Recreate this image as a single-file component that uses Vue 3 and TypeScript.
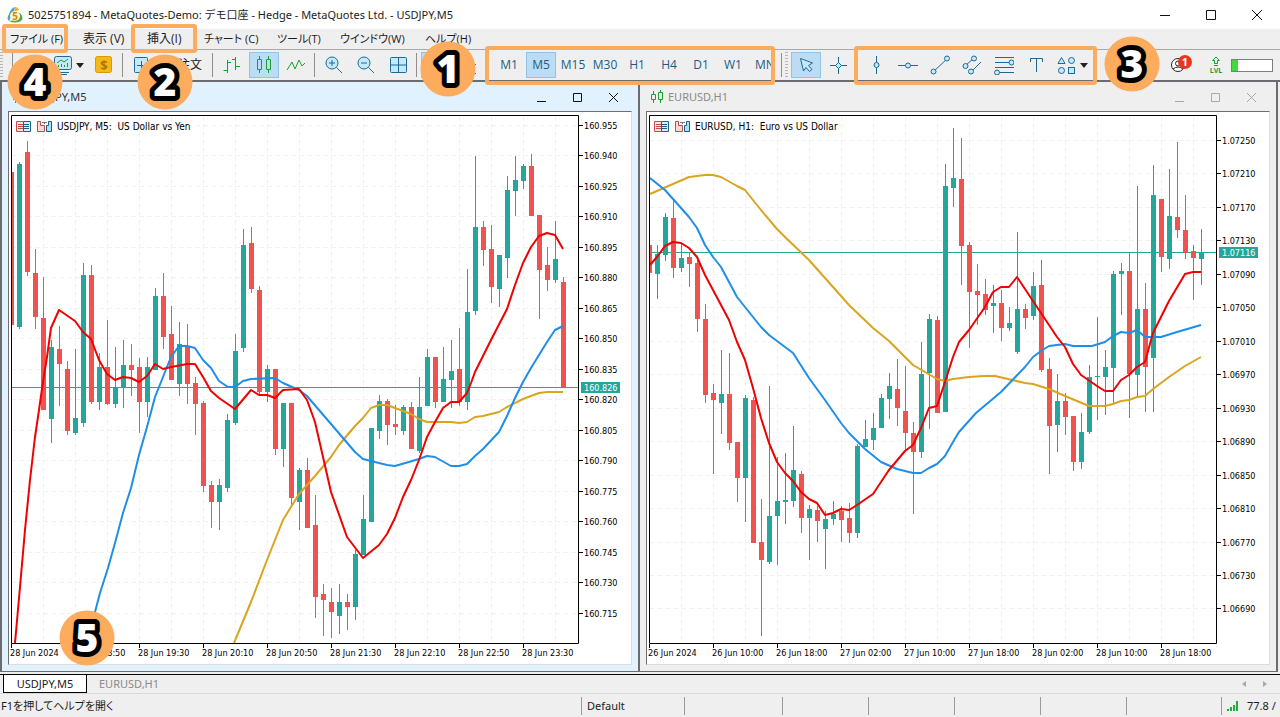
<script setup lang="ts">
import { ref } from 'vue'

type Candle = { x: number; up: boolean; high: number; top: number; bottom: number; low: number }
type Tick = { pos: number; label: string }

interface Chart {
  id: string
  name: string
  title: string
  active: boolean
  originX: number
  frameX: number
  lastY: number
  lastPrice: string
  candles: Candle[]
  averages: { color: string; points: string }[]
  prices: Tick[]
  times: Tick[]
  gridX: number[]
}

const CANDLE_STEP = 8

// Each record reads: direction (u/d), high, body top, body bottom, low.
function parseCandles(source: string, firstX: number): Candle[] {
  return source
    .trim()
    .split(/\s+/)
    .map((record, i) => {
      const [high, top, bottom, low] = record.slice(1).split(',').map(Number)
      return { x: firstX + i * CANDLE_STEP, up: record[0] === 'u', high, top, bottom, low }
    })
}

function priceTicks(start: number, delta: number, digits: number, count: number, y: number, step: number): Tick[] {
  return Array.from({ length: count }, (_, i) => ({
    pos: Math.round(y + i * step),
    label: (start - delta * i).toFixed(digits),
  }))
}

function timeTicks(labels: string[], x: number): Tick[] {
  return labels.map((label, i) => ({ pos: x + i * 64, label }))
}

function gridColumns(frameX: number): number[] {
  return Array.from({ length: 17 }, (_, i) => frameX + 32 * (i + 1))
}

const usdjpyCandles = `
d172,172,325,325 u162,164,327,329 d141,152,272,276 d249,273,317,329 d277,318,410,410 u340,347,419,443
d326,349,364,406 d361,369,431,435 u349,418,433,435 u263,275,423,427 d265,275,402,404 u353,367,402,410
d320,367,404,405 u347,388,404,408 u340,365,387,408 d344,365,370,396 d358,367,402,433 u357,367,402,417
u288,296,370,370 d273,296,337,349 d306,334,380,380 u322,344,384,396 d324,347,384,404 d377,383,404,435
d401,403,486,492 d481,485,502,528 u479,485,502,530 u414,420,488,492 u334,351,423,425 u229,245,348,352
d227,243,289,293 d286,290,392,394 u365,369,392,402 d369,369,449,455 u403,403,449,467 d403,403,498,505
u468,470,502,530 d458,470,528,528 d495,525,597,618 d584,594,600,636 d588,602,612,638 u584,602,616,634
d594,602,607,630 u550,554,607,620 u495,519,555,555 u428,428,522,522 u395,401,431,439 d399,401,425,445
d405,424,427,435 u405,407,431,435 d402,407,449,449 u377,407,451,453 u349,357,406,406 d357,357,402,408
u347,379,402,402 u340,371,380,408 d328,369,402,406 u269,312,402,410 u156,227,311,315 d221,227,250,266
d225,249,287,303 u255,255,289,307 u176,190,258,278 u156,180,191,216 u164,166,181,189 d154,166,216,216
d215,215,270,319 d247,265,280,291 u221,259,280,283 d277,282,388,388`

const eurusdCandles = `
d245,245,273,273 u245,254,274,299 u213,217,255,261 d200,218,268,278 u243,258,268,272 d253,257,264,287
d260,263,319,332 d304,319,395,403 d384,393,400,474 u350,394,403,434 d353,394,443,450 d442,442,478,502
u395,398,478,522 d397,400,543,543 d499,542,560,636 u386,516,562,564 u457,501,516,565 u453,500,502,524
u426,470,501,507 d471,474,518,533 u505,509,518,560 d506,510,521,542 u511,519,529,569 u501,514,519,525
d506,511,520,542 d503,518,533,543 u444,446,533,538 u420,439,447,447 u413,428,440,450 u394,398,428,428
u373,386,399,419 d359,389,408,426 d366,411,433,450 d422,433,452,514 u342,374,452,458 u314,319,373,429
d316,320,413,413 u164,186,412,412 u128,178,188,207 d138,179,246,285 d242,245,292,348 d264,291,295,325
d279,294,310,315 u285,303,306,333 d290,303,328,341 u307,323,328,331 u232,309,352,354 d304,309,318,329
u272,286,316,320 d260,285,370,372 d358,369,426,474 u374,401,425,452 d393,401,417,435 d416,416,462,471
u413,432,462,469 u365,377,432,434 u317,376,377,420 u350,367,377,415 u271,274,368,404 u263,271,274,315
d253,271,374,418 u186,309,375,397 d283,309,367,412 u165,195,358,412 d199,199,257,272 u169,216,259,269
d142,217,230,238 d195,230,253,259 d245,251,258,300 u229,253,259,285`

const charts: Chart[] = [
  {
    id: 'usdjpy',
    name: 'USDJPY,M5',
    title: 'USDJPY, M5:\u00a0 US Dollar vs Yen',
    active: true,
    originX: 9,
    frameX: 11,
    lastY: 387,
    lastPrice: '160.826',
    candles: parseCandles(usdjpyCandles, 11),
    averages: [
      {
        color: '#d9a520',
        points:
          '234,643 251,602 267,560 283,520 299,494 315,476 331,457 339,445 355,426 363,418 371,408 379,405 387,405 395,408 411,414 419,419 427,422 451,422 459,423 467,422 475,417 483,416 499,412 507,407 523,399 539,393 547,392 563,392',
      },
      {
        color: '#1e8fe8',
        points:
          '91,624 95,612 100,593 108,568 115,543 123,513 131,488 139,455 147,427 155,397 163,377 171,357 179,346 187,346 195,348 203,360 211,368 219,381 228,387 235,387 243,381 251,379 275,378 283,383 299,390 307,396 331,424 355,452 363,459 387,465 395,466 419,459 427,456 435,457 451,466 459,466 467,464 475,456 483,449 499,432 507,416 515,398 523,382 531,368 547,342 555,330 563,326',
      },
      {
        color: '#f00000',
        points:
          '15,643 20,587 25,530 30,480 35,437 39,410 43,382 47,357 51,328 59,310 75,321 83,332 91,339 99,360 107,374 115,380 123,377 131,378 139,382 147,376 155,364 163,369 171,367 187,364 195,364 203,377 211,391 219,398 235,409 251,390 259,395 267,395 275,398 283,390 299,389 307,400 315,422 323,457 331,492 347,537 363,558 379,545 387,534 395,518 403,497 411,480 419,460 427,437 435,422 443,408 451,402 459,402 467,393 471,383 475,372 491,340 507,309 515,285 523,263 531,247 539,236 547,233 555,235 563,249',
      },
    ],
    prices: priceTicks(160.955, 0.015, 3, 17, 125, 30.47),
    times: timeTicks(
      ['28 Jun 2024', '28 Jun 18:50', '28 Jun 19:30', '28 Jun 20:10', '28 Jun 20:50', '28 Jun 21:30', '28 Jun 22:10', '28 Jun 22:50', '28 Jun 23:30'],
      11,
    ),
    gridX: gridColumns(11),
  },
  {
    id: 'eurusd',
    name: 'EURUSD,H1',
    title: 'EURUSD, H1:\u00a0 Euro vs US Dollar',
    active: false,
    originX: 647,
    frameX: 649,
    lastY: 252,
    lastPrice: '1.07116',
    candles: parseCandles(eurusdCandles, 649),
    averages: [
      {
        color: '#d9a520',
        points:
          '650,194 673,184 689,177 705,175 713,175 721,177 737,186 745,190 761,210 777,229 785,237 809,260 825,278 849,305 873,328 889,341 913,365 937,379 945,381 953,379 969,377 984,376 995,376 1025,383 1033,384 1049,389 1065,396 1089,406 1105,406 1113,404 1121,401 1129,400 1137,397 1145,396 1153,389 1169,377 1185,366 1201,357',
      },
      {
        color: '#1e8fe8',
        points:
          '650,178 665,190 681,208 689,217 697,228 705,245 713,257 721,267 737,297 745,307 761,327 769,335 793,353 809,378 825,400 841,423 849,433 865,449 881,462 897,469 913,473 921,473 929,468 937,464 945,456 953,442 959,432 976,413 1001,392 1025,367 1033,357 1041,351 1049,346 1065,344 1073,346 1092,346 1105,342 1113,336 1121,332 1129,333 1137,330 1145,337 1161,337 1177,332 1201,325',
      },
      {
        color: '#f00000',
        points:
          '650,265 657,257 665,246 673,242 681,243 689,248 697,257 705,275 713,290 721,305 729,320 737,342 745,360 753,388 761,418 769,443 777,462 785,473 793,481 801,492 809,499 817,503 825,515 833,513 841,509 849,510 857,505 873,494 889,470 905,451 913,445 921,428 929,408 937,406 945,382 953,357 959,342 969,330 985,307 993,292 1001,287 1009,287 1017,277 1041,313 1057,337 1065,347 1073,364 1081,375 1097,386 1105,391 1113,391 1121,380 1129,375 1137,367 1145,362 1153,333 1169,301 1185,274 1193,272 1201,272',
      },
    ],
    prices: priceTicks(1.0725, 0.0004, 5, 15, 140, 33.46),
    times: timeTicks(
      ['26 Jun 2024', '26 Jun 10:00', '26 Jun 18:00', '27 Jun 02:00', '27 Jun 10:00', '27 Jun 18:00', '28 Jun 02:00', '28 Jun 10:00', '28 Jun 18:00'],
      649,
    ),
    gridX: gridColumns(649),
  },
]

const menus = [
  { label: 'ファイル (F)', size: 'w73', kana: true },
  { label: '表示 (V)', size: 'w64', kana: false },
  { label: '挿入(I)', size: 'w57', kana: false },
  { label: 'チャート (C)', size: 'w73', kana: true },
  { label: 'ツール(T)', size: 'w63', kana: true },
  { label: 'ウインドウ(W)', size: 'w85', kana: true },
  { label: 'ヘルプ(H)', size: 'w63', kana: true },
]

const timeframes = ['M1', 'M5', 'M15', 'M30', 'H1', 'H4', 'D1', 'W1', 'MN']
const timeframe = ref('M5')

const callouts = [
  { n: 1, place: 'c1' },
  { n: 2, place: 'c2' },
  { n: 3, place: 'c3' },
  { n: 4, place: 'c4' },
  { n: 5, place: 'c5' },
]
</script>

<template>
  <div class="app">
    <header class="titlebar">
      <svg class="logo" width="18" height="18" viewBox="0 0 18 18">
        <path d="M9 1 Q12 1 13 4 L8 6 Z" fill="#f0b41c" />
        <path d="M9 1 Q5 2 3 8 Q0 13 3 15 L7 8 Z" fill="#4f9fd0" />
        <path d="M3 15 Q9 18 15 15 Q18 13 15 8 L12 6 Q14 12 9 14 Z" fill="#5aa646" />
        <circle cx="9" cy="10" r="5" fill="#fff4cf" />
        <text x="9" y="14" text-anchor="middle" class="logo-text">5</text>
      </svg>
      <h1 class="app-title">5025751894 - MetaQuotes-Demo: デモ口座 - Hedge - MetaQuotes Ltd. - USDJPY,M5</h1>
      <div class="window-buttons">
        <button type="button" aria-label="Minimize"><svg width="12" height="12"><path d="M1 6.500H11" /></svg></button>
        <button type="button" aria-label="Maximize"><svg width="12" height="12"><path d="M1.500 1.500H10.500V10.500H1.500Z" /></svg></button>
        <button type="button" aria-label="Close"><svg width="12" height="12"><path d="M1 1L11 11M11 1L1 11" /></svg></button>
      </div>
    </header>

    <nav class="menubar">
      <button v-for="m in menus" :key="m.label" type="button" :class="[m.size, { kana: m.kana }]">{{ m.label }}</button>
    </nav>

    <div class="toolbar">
      <i class="grip"></i>
      <i class="sep first"></i>
      <div class="group">
        <button type="button" class="tool" aria-label="New chart"></button>
        <button type="button" class="tool drop" aria-label="Profiles">
          <svg width="20" height="20" viewBox="0 0 20 20">
            <rect class="lt" x="1.500" y="1.500" width="17" height="13" rx="2" />
            <path class="ln" d="M4 17.500H16M6 19.500H14" />
            <path class="gr" d="M4 8L8 5L11 7L15 4M5.500 12V10M8.500 12V9M11.500 12V10M14.500 12V8" />
          </svg>
          <svg width="8" height="5" viewBox="0 0 8 5"><path d="M0 0H8L4 5Z" fill="#222" /></svg>
        </button>
        <button type="button" class="tool" aria-label="Market">
          <svg width="20" height="20" viewBox="0 0 20 20">
            <rect x="1.500" y="1.500" width="16" height="16" rx="2" fill="#f5b915" stroke="#d59a08" />
            <text x="10" y="15" text-anchor="middle" class="dollar">$</text>
          </svg>
        </button>
      </div>
      <i class="sep"></i>
      <button type="button" class="order">
        <svg width="16" height="18" viewBox="0 0 16 18">
          <rect class="lt" x="0.500" y="1.500" width="13" height="15" rx="1" />
          <path class="ln" d="M3 9.500H11M7.500 5V13" />
        </svg>
        <span>新規注文</span>
      </button>
      <i class="sep"></i>
      <div class="group">
        <button type="button" class="tool" aria-label="Bar chart">
          <svg width="20" height="20" viewBox="0 0 20 20"><path class="gr" d="M5.500 5V18M1.500 15.500H5.500M5.500 7.500H9M13.500 2V15M10 4.500H13.500M13.500 11.500H18" /></svg>
        </button>
        <button type="button" class="tool on" aria-label="Candlesticks">
          <svg width="20" height="20" viewBox="0 0 20 20"><path class="gr" d="M5.500 1V4M5.500 15V18M3.500 4.500H7.500V14.500H3.500ZM14.500 1V4M14.500 15V18M12.500 4.500H16.500V14.500H12.500Z" /></svg>
        </button>
        <button type="button" class="tool" aria-label="Line chart">
          <svg width="20" height="20" viewBox="0 0 20 20"><path class="gr" d="M1 15L6 7L9 14L13 5L16 11L19 8" /></svg>
        </button>
      </div>
      <i class="sep"></i>
      <div class="group">
        <button type="button" class="tool" aria-label="Zoom in">
          <svg width="20" height="20" viewBox="0 0 20 20"><circle class="lt" cx="8" cy="8" r="6" /><path class="ln" d="M12.500 12.500L18 18M5 8H11M8 5V11" /></svg>
        </button>
        <button type="button" class="tool" aria-label="Zoom out">
          <svg width="20" height="20" viewBox="0 0 20 20"><circle class="lt" cx="8" cy="8" r="6" /><path class="ln" d="M12.500 12.500L18 18M5 8H11" /></svg>
        </button>
        <button type="button" class="tool" aria-label="Tile windows">
          <svg width="20" height="20" viewBox="0 0 20 20"><rect class="lt" x="2.500" y="2.500" width="16" height="15" rx="1" /><path class="ln" d="M10.500 2V18M2 10H18" /></svg>
        </button>
      </div>
      <i class="sep"></i>
      <div class="group">
        <button type="button" class="tool on" aria-label="Auto scroll"></button>
        <button type="button" class="tool" aria-label="Chart shift">
          <svg width="20" height="20" viewBox="0 0 20 20"><path class="ln" d="M14 9.500H18M14 18.500H18M4 2V18" /></svg>
        </button>
      </div>
      <i class="sep"></i>
      <div class="group frames">
        <button
          v-for="t in timeframes"
          :key="t"
          type="button"
          class="tool"
          :class="{ on: timeframe === t }"
          @click="timeframe = t"
        >{{ t }}</button>
      </div>
      <i class="sep wide"></i>
      <i class="grip"></i>
      <div class="group">
        <button type="button" class="tool on" aria-label="Cursor">
          <svg width="20" height="20" viewBox="0 0 20 20"><path class="lt" d="M4.500 3.500L16.500 8L12.500 10.500L16 14.500L13.500 16.500L10 12.500L7.500 16Z" /></svg>
        </button>
        <button type="button" class="tool" aria-label="Crosshair">
          <svg width="20" height="20" viewBox="0 0 20 20"><path class="ln" d="M10.500 2V8M10.500 13V19M2 10.500H8M13 10.500H19" /><path class="lt" d="M10.500 7.500L13.500 10.500L10.500 13.500L7.500 10.500Z" /></svg>
        </button>
      </div>
      <i class="sep"></i>
      <div class="group">
        <button type="button" class="tool" aria-label="Vertical line">
          <svg width="20" height="20" viewBox="0 0 20 20"><path class="ln" d="M10.500 1V19" /><circle class="lt" cx="10.500" cy="10" r="2.500" /></svg>
        </button>
        <button type="button" class="tool" aria-label="Horizontal line">
          <svg width="20" height="20" viewBox="0 0 20 20"><path class="ln" d="M0 10.500H20" /><circle class="lt" cx="10" cy="10.500" r="2.500" /></svg>
        </button>
        <button type="button" class="tool" aria-label="Trend line">
          <svg width="20" height="20" viewBox="0 0 20 20"><path class="ln" d="M3 17L18 3" /><circle class="lt" cx="3.500" cy="16.500" r="2.500" /><circle class="lt" cx="17" cy="3.500" r="2.500" /></svg>
        </button>
        <button type="button" class="tool" aria-label="Channel">
          <svg width="20" height="20" viewBox="0 0 20 20"><path class="ln" d="M3 11L12 3M9 17L19 7" /><circle class="lt" cx="3.500" cy="11" r="2.500" /><circle class="lt" cx="12" cy="3.500" r="2.500" /><circle class="lt" cx="9" cy="16.500" r="2.500" /></svg>
        </button>
        <button type="button" class="tool" aria-label="Fibonacci">
          <svg width="20" height="20" viewBox="0 0 20 20"><path class="ln" d="M1 2.500H20M1 7.500H15M1 12.500H20M5 17.500H20" /><circle class="lt" cx="17.500" cy="7.500" r="2.500" /><circle class="lt" cx="3" cy="17.500" r="2.500" /></svg>
        </button>
        <button type="button" class="tool" aria-label="Text">
          <svg width="20" height="20" viewBox="0 0 20 20"><path class="ln" d="M4.500 7V3.500H16.500V7M10.500 3.500V17" /></svg>
        </button>
        <button type="button" class="tool drop" aria-label="Shapes">
          <svg width="20" height="20" viewBox="0 0 20 20"><path class="lt" d="M4.500 2.500L8 8.500H1Z" /><circle class="lt" cx="14.500" cy="5.500" r="3" /><circle class="lt" cx="4.500" cy="15.500" r="3" /><rect class="lt" x="11.500" y="12.500" width="6" height="6" /></svg>
          <svg width="8" height="5" viewBox="0 0 8 5"><path d="M0 0H8L4 5Z" fill="#222" /></svg>
        </button>
      </div>
      <div class="account">
        <button type="button" class="tool" aria-label="Notifications">
          <svg width="24" height="20" viewBox="0 0 24 20">
            <circle cx="8" cy="10" r="6.500" fill="#fff" stroke="#222" />
            <circle cx="8" cy="8.500" r="2.500" fill="none" stroke="#222" />
            <path d="M3 14Q8 10 13 14" fill="none" stroke="#222" />
            <circle cx="15" cy="7" r="7" fill="#e8371f" />
            <text x="15" y="11" text-anchor="middle" class="count">1</text>
          </svg>
        </button>
        <svg class="level" width="16" height="20" viewBox="0 0 16 20">
          <path class="gr" d="M6.500 8.500V5.500H4.500L8 2L11.500 5.500H9.500V8.500ZM6 10.500H10" />
          <text x="8" y="18" text-anchor="middle" class="lvl">LVL</text>
        </svg>
        <div class="meter"><i></i></div>
      </div>
    </div>

    <main class="workspace">
      <section v-for="c in charts" :key="c.id" class="chart-window" :class="{ active: c.active }">
        <header class="chart-head">
          <svg width="14" height="14" viewBox="0 0 14 14"><path class="gr" d="M3.500 1V4M3.500 10V13M1.500 4.500H5.500V9.500H1.500ZM10.500 0V2M10.500 10V13M8.500 2.500H12.500V9.500H8.500Z" /></svg>
          <h2>{{ c.name }}</h2>
          <div class="chart-buttons">
            <button type="button" aria-label="Minimize"><svg width="12" height="12"><path d="M1 10.500H10" /></svg></button>
            <button type="button" aria-label="Maximize"><svg width="12" height="12"><path d="M1.500 2.500H9.500V10.500H1.500Z" /></svg></button>
            <button type="button" aria-label="Close"><svg width="12" height="12"><path d="M1 2L10 11M10 2L1 11" /></svg></button>
          </div>
        </header>
        <div class="canvas">
          <svg :viewBox="`${c.originX} 112 622 552`" role="img" :aria-label="c.name">
            <defs>
              <clipPath :id="c.id + '-clip'"><rect :x="c.frameX" y="115" width="568" height="529" /></clipPath>
            </defs>
            <g class="grid">
              <path v-for="x in c.gridX" :key="x" :d="`M${x + 0.5} 116V643`" />
              <path v-for="p in c.prices" :key="p.pos" :d="`M${c.frameX} ${p.pos + 0.5}H${c.frameX + 567}`" />
            </g>
            <g :clip-path="`url(#${c.id}-clip)`">
              <rect class="up" :x="c.frameX" :y="c.lastY" width="568" height="1" />
              <g v-for="k in c.candles" :key="k.x" :class="k.up ? 'up' : 'down'">
                <rect :x="k.x" :y="k.high" width="1" :height="k.low - k.high" />
                <rect :x="k.x - 2" :y="k.top" width="5" :height="k.bottom - k.top" />
              </g>
              <polyline v-for="a in c.averages" :key="a.color" :points="a.points" :stroke="a.color" class="ma" />
            </g>
            <path class="frame" :d="`M${c.frameX + 0.5} 115.5H${c.frameX + 567.5}V643.5H${c.frameX + 0.5}Z`" />
            <g v-for="p in c.prices" :key="p.label">
              <path class="frame" :d="`M${c.frameX + 568} ${p.pos + 0.5}H${c.frameX + 572}`" />
              <text :x="c.frameX + 573" :y="p.pos + 4" class="axis">{{ p.label }}</text>
            </g>
            <g v-for="t in c.times" :key="t.label">
              <path class="frame" :d="`M${t.pos + 0.5} 644V648`" />
              <text :x="t.pos - 1" y="656" class="axis">{{ t.label }}</text>
            </g>
            <rect class="up" :x="c.frameX + 570" :y="c.lastY - 5" width="39" height="11" />
            <text :x="c.frameX + 573" :y="c.lastY + 4" class="axis last">{{ c.lastPrice }}</text>
            <g :transform="`translate(${c.frameX + 5} 121)`" fill="none">
              <path d="M7.500 0.500H0.500V10.500H7.500" stroke="#c94a4a" fill="#ffe4e0" />
              <path d="M7.500 0.500H14.500V10.500H7.500Z" stroke="#1d5f85" fill="#d9f1fc" />
              <path d="M2 3.500H7M2 5.500H7M2 7.500H7" stroke="#c94a4a" />
              <path d="M8 3.500H13M8 5.500H13M8 7.500H13" stroke="#1d5f85" />
              <path d="M21.500 0.500H24.500V4.500H28.500V10.500H21.500Z" stroke="#c94a4a" fill="#ffd9d2" />
              <path d="M30.500 10.500V4.500H32.500V0.500H35.500V10.500Z" stroke="#1d5f85" fill="#a5e2fb" />
              <path d="M26 1.500H31M28.500 1.500V3" stroke="#777" />
            </g>
            <text :x="c.frameX + 46" y="130" class="caption">{{ c.title }}</text>
          </svg>
        </div>
      </section>
    </main>

    <nav class="tabs">
      <button v-for="c in charts" :key="c.id" type="button" :class="{ active: c.active }">{{ c.name }}</button>
      <div class="scrollers">
        <button type="button" aria-label="Scroll left"><svg width="4" height="6"><path d="M4 0V6L0 3Z" /></svg></button>
        <button type="button" aria-label="Scroll right"><svg width="4" height="6"><path d="M0 0V6L4 3Z" /></svg></button>
      </div>
    </nav>

    <footer class="status">
      <span class="help">F1を押してヘルプを開く</span>
      <span class="cell s103">Default</span>
      <span class="cell s98"></span>
      <span class="cell s86"></span>
      <span class="cell s86"></span>
      <span class="cell s86"></span>
      <span class="cell s86"></span>
      <span class="cell s95"></span>
      <span class="cell s59">
        <svg width="12" height="10" viewBox="0 0 12 10"><path d="M0 8H2V10H0ZM3 6H5V10H3ZM6 4H8V10H6ZM9 0H11V10H9Z" fill="#1fae3c" /></svg>
        <span>77.8 /</span>
      </span>
    </footer>

    <div class="marker file"></div>
    <div class="marker insert"></div>
    <div class="marker periods"></div>
    <div class="marker drawing"></div>
    <svg v-for="b in callouts" :key="b.n" class="callout" :class="b.place" width="56" height="56" viewBox="0 0 56 56">
      <circle cx="28" cy="28" r="27.500" fill="#fdab5d" />
      <text x="28" y="42" text-anchor="middle">{{ b.n }}</text>
    </svg>
  </div>
</template>

<style>
body {
  margin: 0;
  background: #efefef;
}
</style>

<style scoped>
.app {
  position: relative;
  overflow: hidden;
  background: #efefef;
  color: #1c1c1c;
  font: 11px/16px "Noto Sans", "Noto Sans CJK JP", sans-serif;
}
button {
  padding: 0;
  border: 0;
  background: none;
  color: inherit;
  font: inherit;
}
h1,
h2 {
  margin: 0;
  font: inherit;
}
.titlebar {
  display: flex;
  align-items: center;
  height: 29px;
  padding-left: 6px;
  background: #fff;
}
.logo {
  margin-right: 4px;
}
.logo-text {
  font: bold 10px "Open Sans", sans-serif;
  fill: #c98b00;
}
.app-title {
  flex: 1;
  white-space: nowrap;
}
.window-buttons,
.chart-buttons {
  display: flex;
}
.window-buttons button {
  display: grid;
  place-items: center;
  width: 46px;
  height: 26px;
}
.window-buttons path,
.chart-buttons path {
  fill: none;
  stroke: #111;
}
.menubar {
  display: flex;
  height: 20px;
  padding-left: 10px;
  border-bottom: 1px solid #a9a9a9;
  font-family: "Open Sans", "Noto Sans CJK JP", sans-serif;
  font-size: 12px;
  line-height: 20px;
  font-feature-settings: "palt";
}
.menubar button {
  text-align: left;
  white-space: nowrap;
}
.menubar .kana {
  font-size: 11px;
}
.w73 { width: 73px; }
.w64 { width: 64px; }
.w57 { width: 57px; }
.w63 { width: 63px; }
.w85 { width: 85px; }

.toolbar {
  display: flex;
  align-items: center;
  height: 30px;
  border-bottom: 2px solid #6c6c70;
  white-space: nowrap;
}
.grip {
  flex: none;
  width: 3px;
  height: 26px;
  background: repeating-linear-gradient(#b5b5b5 0 1px, transparent 1px 3px);
}
.sep {
  flex: none;
  width: 1px;
  height: 24px;
  margin: 0 4px 0 3px;
  background: #8f8f8f;
}
.sep.first {
  margin-left: 9px;
}
.sep.wide {
  margin: 0 3px 0 10px;
}
.group {
  display: flex;
  flex: none;
  gap: 2px;
}
.grip + .group {
  margin-left: 3px;
}
.tool {
  display: flex;
  flex: none;
  align-items: center;
  justify-content: center;
  box-sizing: border-box;
  width: 30px;
  height: 26px;
}
.tool.on {
  border: 1px solid #8fc4ea;
  background: #bcdcf4;
}
.tool.drop {
  justify-content: space-between;
  width: 38px;
  padding: 0 3px 0 4px;
}
.frames {
  width: 277px;
  margin-left: 3px;
  overflow: hidden;
  color: #1a5c86;
  font-family: "Open Sans", sans-serif;
  font-size: 12px;
}
.order {
  display: flex;
  flex: none;
  align-items: center;
  gap: 4px;
  box-sizing: border-box;
  width: 82px;
  padding-left: 7px;
  font-size: 12px;
}
.ln {
  fill: none;
  stroke: #1b6a98;
}
.lt {
  fill: #c5e9fa;
  stroke: #1b6a98;
}
.gr {
  fill: none;
  stroke: #17a02e;
}
.dollar {
  font: bold 13px "Open Sans", sans-serif;
  fill: #b07500;
}
.account {
  display: flex;
  align-items: center;
  margin-left: auto;
  padding-right: 7px;
}
.account .tool svg {
  flex: none;
}
.count {
  font: bold 11px "Open Sans", sans-serif;
  fill: #fff;
}
.lvl {
  font: bold 7px "Open Sans", sans-serif;
  fill: #17a02e;
}
.level {
  margin: 0 7px 0 11px;
}
.meter {
  box-sizing: border-box;
  width: 42px;
  height: 13px;
  border: 1px solid #7d7d7d;
  background: #fff;
}
.meter i {
  display: block;
  width: 6px;
  height: 100%;
  background: #3ddc3d;
}

.workspace {
  display: flex;
  gap: 2px;
  margin-right: 2px;
  padding: 0 2px 0 2px;
  border-bottom: 1px solid #6c6c70;
  background: #6c6c70;
}
.chart-window {
  flex: 1;
  min-width: 0;
  padding: 0 6px 6px;
  background: #efefef;
  color: #8a8a8a;
}
.chart-window.active {
  background: #e2f1fe;
  color: #333;
}
.chart-head {
  display: flex;
  align-items: center;
  height: 29px;
  padding-left: 4px;
}
.chart-head h2 {
  flex: 1;
  margin-left: 4px;
}
.chart-buttons button {
  display: grid;
  place-items: center;
  width: 36px;
  height: 25px;
}
.chart-window:not(.active) .chart-buttons path {
  stroke: #a8a8a8;
}
.canvas {
  border: 1px solid #dcdcdc;
  border-top-color: #6f6f6f;
  border-left-color: #6f6f6f;
  background: #fff;
}
.canvas svg {
  display: block;
  width: 100%;
  height: auto;
}
.grid {
  fill: none;
  stroke: #f1f1f1;
  stroke-dasharray: 5 3;
}
.frame {
  fill: none;
  stroke: #000;
}
.up { fill: #26a69a; }
.down { fill: #ef5350; }
.ma {
  fill: none;
  stroke-width: 2;
  stroke-linejoin: round;
}
.axis {
  font: 9px "DejaVu Sans Condensed", "DejaVu Sans", sans-serif;
  fill: #000;
}
.axis.last {
  fill: #fff;
}
.caption {
  font: 10px "DejaVu Sans Condensed", "DejaVu Sans", sans-serif;
  fill: #000;
}

.tabs {
  display: flex;
  height: 18px;
  margin-top: 2px;
  padding-left: 3px;
  border-top: 1px solid #000;
  border-bottom: 1px solid #d9d9d9;
  color: #8a8a8a;
}
.tabs > button {
  box-sizing: border-box;
  width: 84px;
  line-height: 18px;
}
.tabs > button.active {
  border: 1px solid #000;
  border-top: 0;
  background: #fff;
  color: #1c1c1c;
}
.scrollers {
  display: flex;
  align-items: center;
  gap: 17px;
  margin-left: auto;
  padding-right: 13px;
}
.scrollers button {
  display: flex;
}
.scrollers path {
  fill: #a8a8a8;
}
.status {
  display: flex;
  align-items: center;
  height: 24px;
}
.help {
  flex: 1;
  padding-left: 1px;
  font-feature-settings: "palt";
}
.cell {
  display: flex;
  align-items: center;
  gap: 8px;
  box-sizing: border-box;
  height: 18px;
  padding-left: 5px;
  border-left: 1px solid #9a9a9a;
  line-height: 18px;
  white-space: nowrap;
}
.s103 { width: 103px; }
.s98 { width: 98px; }
.s86 { width: 86px; }
.s95 { width: 95px; }
.s59 { width: 59px; }

.marker {
  position: absolute;
  box-sizing: border-box;
  border: 4px solid #fdab5d;
  border-radius: 3px;
  pointer-events: none;
}
.file { left: 2px; top: 24px; width: 66px; height: 29px; }
.insert { left: 131px; top: 24px; width: 66px; height: 29px; }
.periods { left: 485px; top: 46px; width: 290px; height: 39px; }
.drawing { left: 854px; top: 46px; width: 243px; height: 39px; }
.callout {
  position: absolute;
  pointer-events: none;
}
.callout text {
  font: 800 39px "Open Sans", sans-serif;
  fill: #fff;
  stroke: #000;
  stroke-width: 10px;
  stroke-linejoin: round;
  paint-order: stroke;
}
.c1 { left: 420px; top: 41px; }
.c2 { left: 137px; top: 54px; }
.c3 { left: 1104px; top: 36px; }
.c4 { left: 7px; top: 54px; }
.c5 { left: 59px; top: 610px; }
</style>
